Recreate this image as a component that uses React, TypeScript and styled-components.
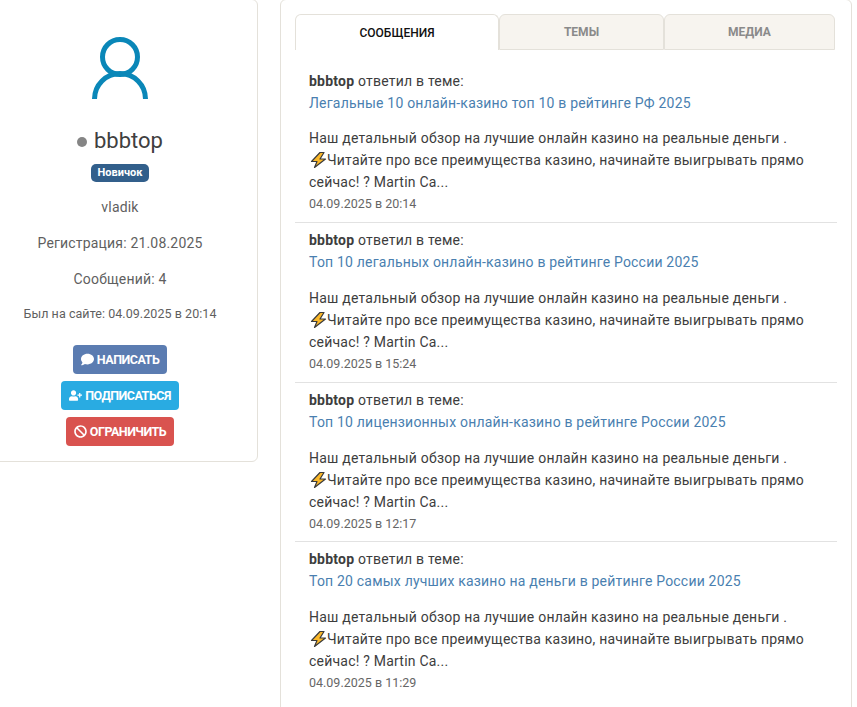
import * as React from "react";
import styled, { createGlobalStyle } from "styled-components";
import { FaBan, FaComment, FaUserPlus } from "react-icons/fa";

const GlobalStyle = createGlobalStyle`
  html, body {
    margin: 0;
    padding: 0;
    height: 100%;
    overflow: hidden;
    background-color: #fff;
  }
  body {
    font-family: Roboto, "Liberation Sans", Arial, sans-serif;
    color: #3d3d3d;
  }
`;

const Page = styled.div`
  display: grid;
  grid-template-columns: 276px 572px;
  column-gap: 22px;
  align-items: start;
  width: 880px;
  margin: -1px 0 0 -18px;
`;
const Panel = styled.div`
  border: 1px solid #e4e1da;
  border-radius: 6px;
  background-color: #fff;
  box-sizing: border-box;
`;
const Sidebar = styled(Panel)`
  display: flex;
  flex-direction: column;
  align-items: center;
  height: 463px;
  padding-top: 37px;
`;
const AvatarIcon = styled.svg`
  display: block;
  width: 60px;
  height: 64px;
  color: #0a87b8;
`;
const NameRow = styled.div`
  display: flex;
  align-items: center;
  gap: 7px;
  margin-top: 26px;
  height: 28px;
`;
const StatusDot = styled.span`
  width: 10px;
  height: 10px;
  border-radius: 50%;
  background-color: #858585;
  margin-top: 2px;
`;
const Name = styled.span`
  font-size: 22px;
  line-height: 28px;
  color: #404040;
`;
const Rank = styled.span`
  margin-top: 9px;
  height: 18px;
  padding: 0 7px;
  border-radius: 5px;
  background-color: #325f8b;
  color: #fff;
  font-size: 11px;
  font-weight: 700;
  line-height: 17px;
`;
const Info = styled.div<{ $small?: boolean; $top: number }>`
  margin-top: ${({ $top }) => $top}px;
  font-size: ${({ $small }) => ($small ? "12.5px" : "14px")};
  letter-spacing: ${({ $small }) => ($small ? "0.06px" : "0.18px")};
  line-height: 20px;
  color: #5f5f5f;
`;
const Actions = styled.div`
  display: flex;
  flex-direction: column;
  align-items: center;
  gap: 7px;
  margin-top: 21px;
`;
const ActionButton = styled.button<{ $color: string }>`
  display: flex;
  align-items: center;
  gap: 3px;
  height: 29px;
  padding: 0 8px;
  border: 0;
  border-radius: 4px;
  background-color: ${({ $color }) => $color};
  color: #fff;
  font-family: inherit;
  font-size: 12.5px;
  font-weight: 700;
  letter-spacing: -0.5px;
  svg {
    font-size: 13px;
  }
`;
const Content = styled(Panel)`
  height: 800px;
  padding: 14px 14px 0;
`;
const Tabs = styled.div`
  display: grid;
  grid-template-columns: 204px 165px 171px;
  height: 36px;
`;
const Tab = styled.div<{ $active?: boolean }>`
  display: flex;
  align-items: center;
  justify-content: center;
  box-sizing: border-box;
  border: 1px solid #e4e1da;
  border-radius: 6px 6px 0 0;
  border-bottom: ${({ $active }) => ($active ? "0" : "1px solid #e4e1da")};
  background-color: ${({ $active }) => ($active ? "#fff" : "#f7f4ef")};
  color: ${({ $active }) => ($active ? "#111" : "#8a8a8a")};
  font-size: 12px;
  font-weight: ${({ $active }) => ($active ? 500 : 700)};
`;
const PostList = styled.div`
  display: flex;
  flex-direction: column;
  margin-top: 14px;
`;
const Line = styled.div`
  font-size: 14px;
  line-height: 22px;
  letter-spacing: 0.22px;
  color: #3d3d3d;
`;
const Author = styled.b`
  font-weight: 700;
`;
const TopicLink = styled.a`
  display: block;
  font-size: 14px;
  line-height: 22px;
  letter-spacing: 0.2px;
  color: #4a7fb0;
  text-decoration: none;
`;
const Excerpt = styled(Line)`
  margin-top: 14px;
`;
const Post = styled.div`
  height: 159.5px;
  box-sizing: border-box;
  padding: 6px 14px 0;
  border-bottom: 1px solid #e2e2e2;
  &:first-child {
    height: 159px;
  }
  &:first-child ${Excerpt} {
    margin-top: 13px;
  }
  &:last-child {
    border-bottom: 0;
  }
`;
const Bolt = styled.svg`
  display: inline-block;
  width: 18px;
  height: 18px;
  vertical-align: -4px;
`;
const PostDate = styled.div`
  margin-top: 2px;
  font-size: 12.5px;
  line-height: 17px;
  color: #666;
`;

const posts = [
  { title: "Легальные 10 онлайн-казино топ 10 в рейтинге РФ 2025", date: "04.09.2025 в 20:14" },
  { title: "Топ 10 легальных онлайн-казино в рейтинге России 2025", date: "04.09.2025 в 15:24" },
  { title: "Топ 10 лицензионных онлайн-казино в рейтинге России 2025", date: "04.09.2025 в 12:17" },
  { title: "Топ 20 самых лучших казино на деньги в рейтинге России 2025", date: "04.09.2025 в 11:29" },
];

const App: React.FC = () => {
  return (
    <>
      <GlobalStyle />
      <Page>
        <Sidebar>
          <AvatarIcon viewBox="0 0 60 64" fill="none" stroke="currentColor" strokeWidth="5">
            <circle cx="30" cy="20" r="17.5" />
            <path d="M4.5 62A25.5 25.5 0 0 1 55.5 62" />
          </AvatarIcon>
          <NameRow>
            <StatusDot />
            <Name>bbbtop</Name>
          </NameRow>
          <Rank>Новичок</Rank>
          <Info $top={15}>vladik</Info>
          <Info $top={16}>Регистрация: 21.08.2025</Info>
          <Info $top={16}>Сообщений: 4</Info>
          <Info $top={15} $small>Был на сайте: 04.09.2025 в 20:14</Info>
          <Actions>
            <ActionButton $color="#5b7cb1"><FaComment />НАПИСАТЬ</ActionButton>
            <ActionButton $color="#29abe2"><FaUserPlus />ПОДПИСАТЬСЯ</ActionButton>
            <ActionButton $color="#d9534f"><FaBan />ОГРАНИЧИТЬ</ActionButton>
          </Actions>
        </Sidebar>
        <Content>
          <Tabs>
            <Tab $active>СООБЩЕНИЯ</Tab>
            <Tab>ТЕМЫ</Tab>
            <Tab>МЕДИА</Tab>
          </Tabs>
          <PostList>
            {posts.map((post) => (
              <Post key={post.date}>
                <Line><Author>bbbtop</Author> ответил в теме:</Line>
                <TopicLink href="#">{post.title}</TopicLink>
                <Excerpt>
                  Наш детальный обзор на лучшие онлайн казино на реальные деньги .
                  <br />
                  <Bolt viewBox="0 0 18 18">
                    <path d="M11 1.5 2.5 10.5h5.5L5.5 16.5 16.5 8h-5.5L15 1.5z" fill="#fbb829" stroke="#3a3a3a" strokeWidth="1.2" strokeLinejoin="round" />
                  </Bolt>
                  Читайте про все преимущества казино, начинайте выигрывать прямо
                  <br />
                  сейчас! ? Martin Ca...
                </Excerpt>
                <PostDate>{post.date}</PostDate>
              </Post>
            ))}
          </PostList>
        </Content>
      </Page>
    </>
  );
};

export default App;
